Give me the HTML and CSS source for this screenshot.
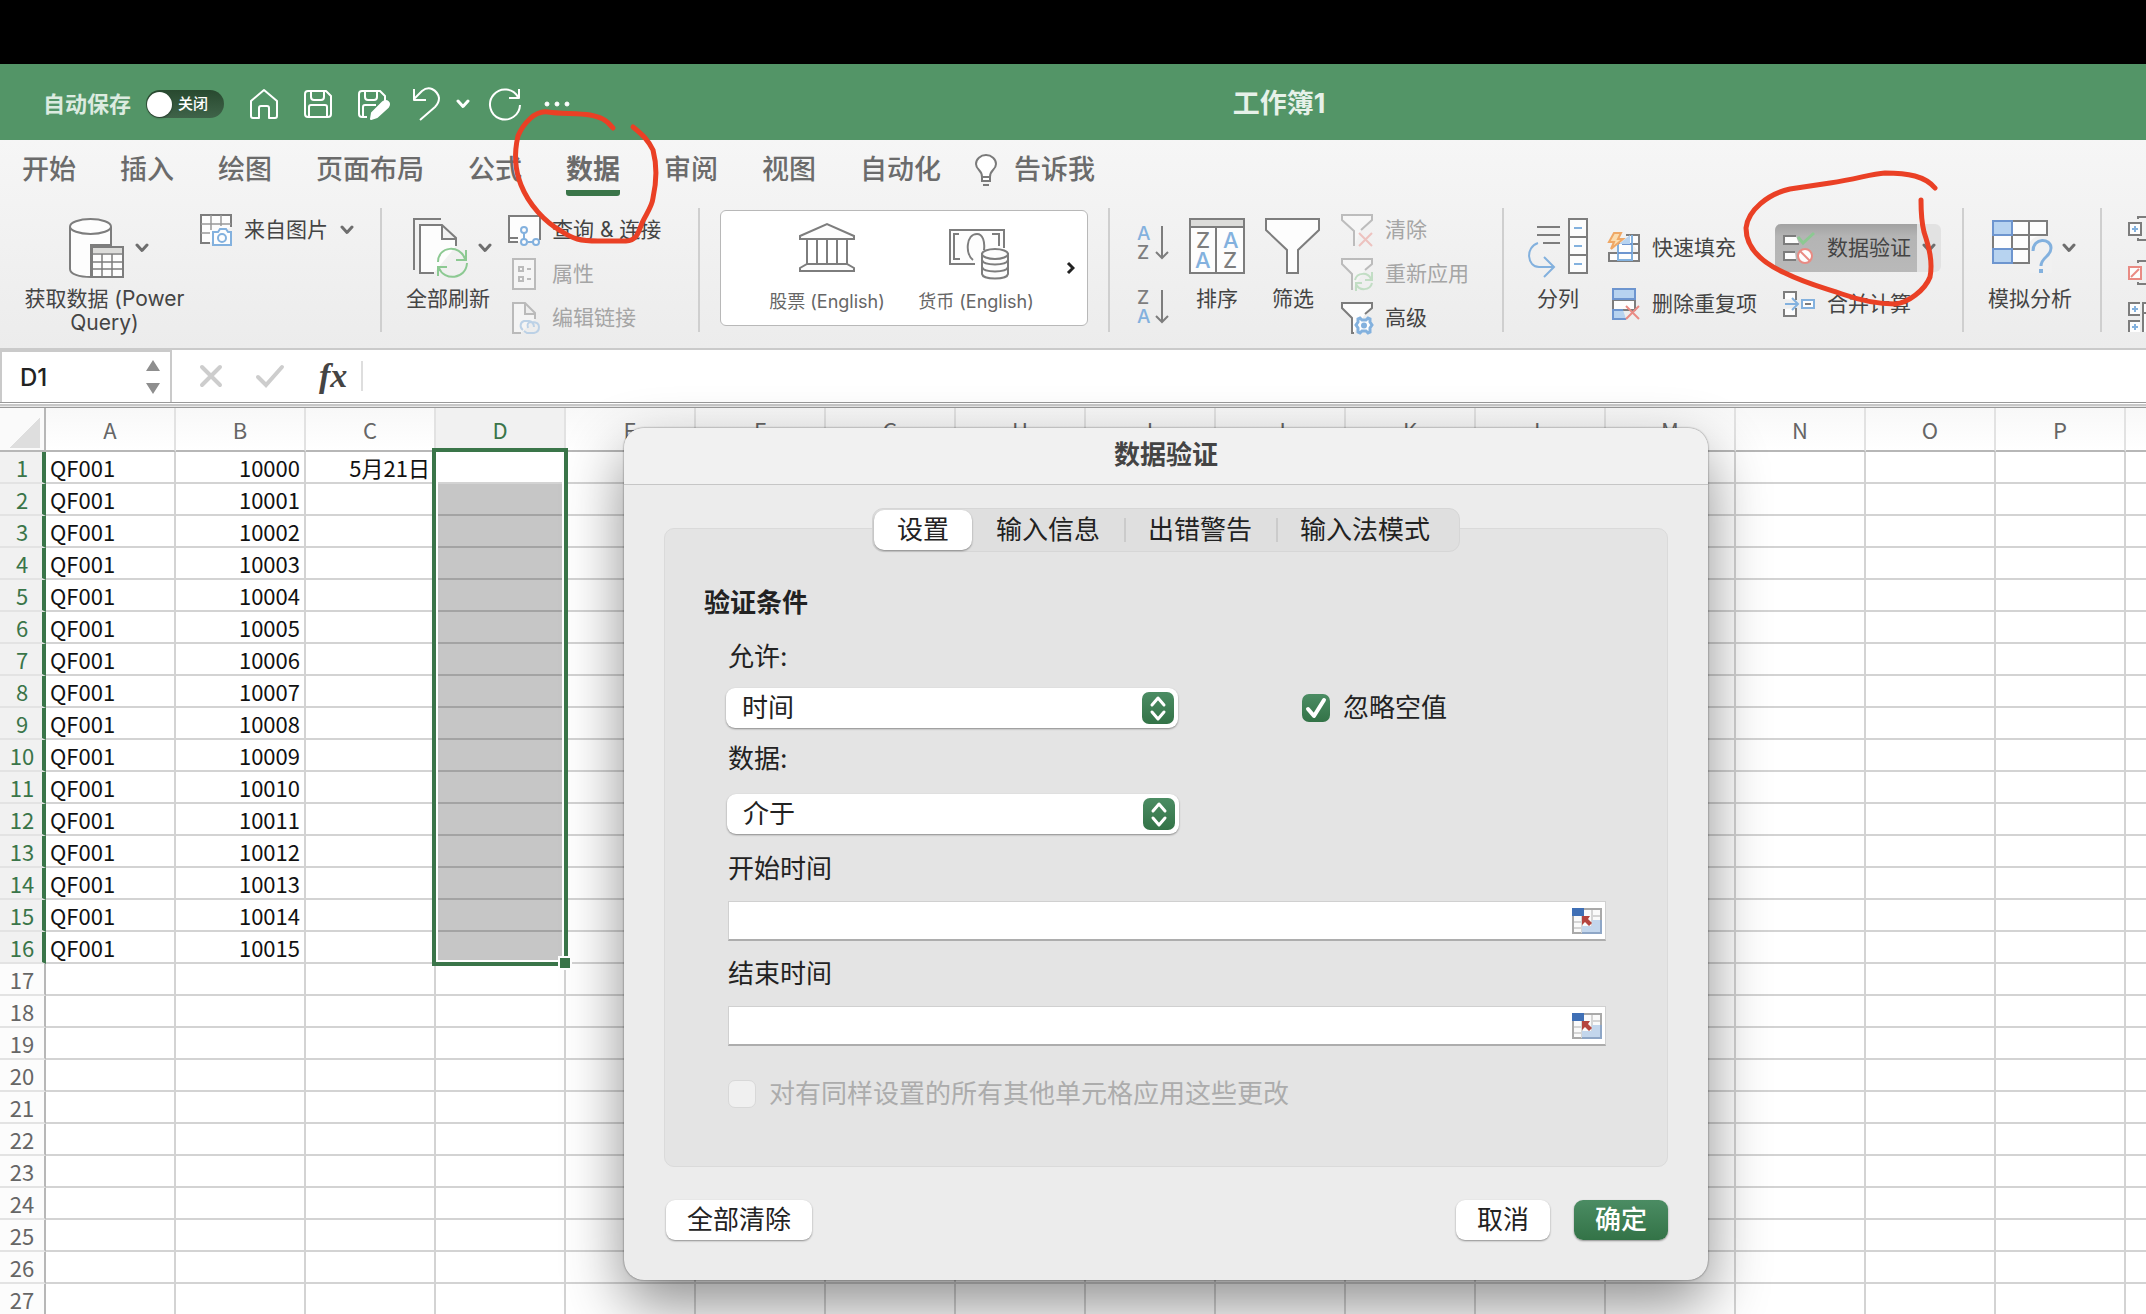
FILE: index.html
```html
<!DOCTYPE html>
<html lang="zh-CN">
<head>
<meta charset="utf-8">
<title>工作簿1</title>
<link rel="stylesheet" href="styles.css">
</head>
<body>
<svg class="defs" aria-hidden="true">
  <symbol id="chevron" viewBox="0 0 14 10"><path d="M2 2l5 5.500l5-5.500" fill="none" stroke="currentColor" stroke-width="3" stroke-linecap="round" stroke-linejoin="round"/></symbol>
  <symbol id="updown" viewBox="0 0 32 32"><path d="M10 13l6-7 6 7M10 20l6 7 6-7" fill="none" stroke="#fff" stroke-width="3" stroke-linecap="round" stroke-linejoin="round"/></symbol>
  <symbol id="picker" viewBox="0 0 30 26">
    <rect x="1" y="1" width="28" height="24" fill="#fafafa" stroke="#a9a9a9" stroke-width="2"/>
    <path d="M2 14h8M2 20h26M10 8v17M20 2v23M20 8h8" stroke="#d5d5d5" stroke-width="2"/>
    <path d="M20 12h9v13H10v-7h10z" fill="#c3d6ec"/>
    <path d="M10 25h19V12" fill="none" stroke="#8ea6c6" stroke-width="2"/>
    <path d="M0 0h12v8H0z" fill="#3f6fb5"/>
    <path d="M10 8h8l-2 3 4 4-3 3-4-4-3 3z" fill="#b5443e"/>
  </symbol>
</svg>

<div class="top-strip"></div>

<header class="titlebar">
  <label class="autosave-label" for="autosave">自动保存</label>
  <button class="toggle" id="autosave" type="button"><span class="knob"></span>关闭</button>
  <nav class="quick" aria-label="快速访问">
    <button type="button" aria-label="主页"><svg width="32" height="32"><path d="M3 13L16 2l13 11v15a2 2 0 0 1-2 2h-6V20q0-2-2-2h-6q-2 0-2 2v10H5a2 2 0 0 1-2-2z"/></svg></button>
    <button type="button" aria-label="保存"><svg width="32" height="32"><path d="M6 3h18l5 5v18a3 3 0 0 1-3 3H6a3 3 0 0 1-3-3V6a3 3 0 0 1 3-3zM9 3v6q0 3 3 3h7q3 0 3-3V3M7 29V19q0-2 2-2h14q2 0 2 2v10"/></svg></button>
    <button type="button" aria-label="另存为"><svg width="32" height="32"><path d="M11 29H6a3 3 0 0 1-3-3V6a3 3 0 0 1 3-3h18l5 5v6M9 3v6q0 3 3 3h6q3 0 3-3V3M7 29V19q0-2 2-2h11"/><path class="solid" d="M15 31l1-6 11-11q3-2 5 0t0 5L21 29z"/></svg></button>
    <span class="undo">
      <button type="button" aria-label="撤消"><svg width="32" height="34"><path d="M4 2v11h12M4 12l8-8q5-4 10-2 6 3 7 9 0 5-4 9L10 33"/></svg></button>
      <button type="button" aria-label="撤消列表"><svg width="14" height="10"><use href="#chevron"/></svg></button>
    </span>
    <button type="button" aria-label="恢复"><svg width="32" height="34"><path d="M29 2v9H19M28 10A15 15 0 1 0 30 18"/></svg></button>
    <button type="button" aria-label="更多"><svg width="26" height="8"><circle class="solid" cx="3" cy="4" r="2"/><circle class="solid" cx="13" cy="4" r="2"/><circle class="solid" cx="23" cy="4" r="2"/></svg></button>
  </nav>
  <h1 class="doc-title">工作簿1</h1>
</header>

<section class="ribbon">
  <nav class="tabs" aria-label="功能区">
    <a href="#">开始</a><a href="#">插入</a><a href="#">绘图</a><a href="#">页面布局</a><a href="#">公式</a><a href="#" class="active">数据</a><a href="#">审阅</a><a href="#">视图</a><a href="#">自动化</a>
    <a href="#" class="tell"><svg width="22" height="34" fill="#fff" stroke="#7a7a7a" stroke-width="2"><path d="M7 23q0-4-3-7-3-3-3-6a10 9 0 0 1 20 0q0 3-3 6-3 3-3 7v4H7zM7 23h8M8 31h6"/></svg>告诉我</a>
  </nav>

  <div class="groups">
    <div class="group g-get">
      <button class="big" type="button">
        <span class="icon-row"><svg width="56" height="60" class="ico">
          <path class="paper" d="M1 9v42c0 5 9 8 21 8V27h20V9"/><ellipse class="paper" cx="21.500" cy="8.500" rx="20.500" ry="7.500"/>
          <path class="paper" d="M23 29h31v30H23z"/><path d="M24 30h29v5H24z" fill="#dcdcda" stroke="none"/><path d="M23 36h31M23 44h31M23 51h31M33 36v23M43 36v23" stroke-width="1.500"/><path d="M23 29h31v30H23z"/>
        </svg><svg class="chev" width="14" height="10"><use href="#chevron"/></svg></span>
        <span>获取数据 (Power<br>Query)</span>
      </button>
      <div class="small-col">
        <button class="small" type="button"><svg width="32" height="32" class="ico">
          <path class="paper" d="M10 29H1V1h30v12"/><path d="M1 10h30M1 19h9M11 1v15M21 1v11" stroke="#999" stroke-width="1.500"/>
          <path class="blue paper" d="M13 18h5l2-3h6l2 3h3v13H13z"/><circle class="blue" cx="22" cy="24" r="4"/>
        </svg>来自图片<svg class="chev" width="14" height="10"><use href="#chevron"/></svg></button>
      </div>
    </div>

    <div class="group g-query">
      <button class="big" type="button">
        <span class="icon-row"><svg width="56" height="60" class="ico">
          <path d="M29 1H2v51"/><path class="paper" d="M22 55H8V7h22l14 13v8M30 7v14h14"/>
          <path class="green" d="M26 44C26 28 48 26 53 41M54 32v10H44M55 45C54 62 32 63 27 50M26 58V49h9"/>
        </svg><svg class="chev" width="14" height="10"><use href="#chevron"/></svg></span>
        <span>全部刷新</span>
      </button>
      <div class="small-col">
        <button class="small" type="button"><svg width="32" height="32" class="ico"><path class="paper" d="M10 28H1V2h31v24M1 24h9"/><g class="blue paper"><path d="M16 19v6M20 28h5"/><circle cx="16" cy="16" r="3"/><circle cx="16" cy="28" r="3"/><circle cx="28" cy="28" r="3"/></g></svg>查询 &amp; 连接</button>
        <button class="small off" type="button" disabled><svg width="32" height="32" class="ico"><path class="paper" d="M5 1h22v30H5z"/><path d="M11 9h4v4h-4zM11 19h4v4h-4zM19 11h4M19 21h4"/></svg>属性</button>
        <button class="small off" type="button" disabled><svg width="32" height="32" class="ico"><path class="paper" d="M13 31H5V1h12l10 10v6M17 1v11h10"/><path class="blue" d="M15 28a5 5 0 0 1 1-9h5q5 1 5 6M20 26q-2-6 4-6 7 0 7 5t-5 6h-7l-3-2"/></svg>编辑链接</button>
      </div>
    </div>

    <div class="group g-types">
      <div class="gallery">
        <button class="type" type="button"><svg width="60" height="60" class="ico"><path class="paper" d="M3 17v-3L30 2l27 12v3zM10 17v25M20 17v25M30 17v25M40 17v25M50 17v25M10 42h40l7 4v3H3v-3z"/></svg>股票 (English)</button>
        <button class="type" type="button"><svg width="60" height="60" class="ico"><path class="paper" d="M29 42H4V8h54v18"/><path d="M13 12H8v25h6M46 12h7v12M27 38c-8-6-7-26 4-26 6 0 8 8 7 16"/><path class="paper" d="M36 31v21c1 6 25 6 26 0V31"/><ellipse class="paper" cx="49" cy="32" rx="13" ry="5"/><path d="M36 38c2 6 24 6 26 0M36 45c2 6 24 6 26 0"/></svg>货币 (English)</button>
        <button class="next" type="button" aria-label="更多类型"><svg width="9" height="14"><path d="M2 2l5 5-5 5" fill="none" stroke="#222" stroke-width="3"/></svg></button>
      </div>
    </div>

    <div class="group g-sort">
      <div class="order">
        <button type="button" aria-label="升序"><svg width="32" height="34" class="ico"><text x="0" y="14" class="lt a">A</text><text x="0" y="33" class="lt z">Z</text><path d="M25 0v32M19 26l6 6 6-6"/></svg></button>
        <button type="button" aria-label="降序"><svg width="32" height="34" class="ico"><text x="0" y="14" class="lt z">Z</text><text x="0" y="33" class="lt a">A</text><path d="M25 0v32M19 26l6 6 6-6"/></svg></button>
      </div>
      <button class="big" type="button"><svg width="56" height="60" class="ico"><path class="paper" d="M1 1h54v54H1z"/><path d="M2 2h52v6H2z" fill="#dcdcda" stroke="none"/><path d="M1 9h54M27 9v46"/><text x="7" y="30" class="lg z">Z</text><text x="6" y="50" class="lg a">A</text><text x="34" y="30" class="lg a">A</text><text x="34" y="50" class="lg z">Z</text></svg><span>排序</span></button>
      <button class="big" type="button"><svg width="56" height="60" class="ico"><path class="paper" d="M1 1h53v11L33 32v23H22V32L1 12z"/></svg><span>筛选</span></button>
      <div class="small-col">
        <button class="small off" type="button" disabled><svg width="32" height="32" class="ico"><path class="paper" d="M13 32V17L1 6V1h30v5L20 16"/><path class="red" d="M18 19l13 13M31 19L18 32"/></svg>清除</button>
        <button class="small off" type="button" disabled><svg width="32" height="32" class="ico"><path class="paper" d="M11 32V16L1 6V1h30v5l-7 6"/><path class="green" d="M14 22c2-8 13-8 16-1M31 14v8h-7M31 25c-2 8-13 8-16 1M15 33v-8h6"/></svg>重新应用</button>
        <button class="small" type="button"><svg width="32" height="32" class="ico"><path class="paper" d="M13 31h-2V16L1 6V1h30v5l-7 6"/><path class="blue paper" stroke-width="3" d="M19 16l2 2h4l2-2 2 1v3l2 3-2 3v4l-2 1-2-2h-4l-2 2-2-1v-4l-2-3 2-3v-3z"/><circle cx="23" cy="23.500" r="3" fill="#83b1de" stroke="none"/></svg>高级</button>
      </div>
    </div>

    <div class="group g-tools">
      <button class="big" type="button"><svg width="60" height="60" class="ico"><path d="M9 9h23M9 17h23M15 25h17"/><path class="paper" d="M41 1h18v54H41zM41 19h18M41 37h18"/><path class="blue" d="M46 10h8M46 28h8M46 46h8M10 25C-3 29-1 49 11 49h14M16 39l10 10-10 10"/></svg><span>分列</span></button>
      <div class="pair-col">
        <button class="small" type="button"><svg width="32" height="32" class="ico"><path class="paper" d="M18 3h13v26H1v-8h30M10 12h21M24 3v26"/><path class="blue paper" stroke="#6d95cf" d="M10 13v15h14V3"/><path d="M10 21h14M14 12h10" stroke="#6d95cf"/><path d="M11 12L22 3v9z" fill="#b7d3f0" stroke="none"/><path d="M6 1h7l-3 6h5L3 17l3-7H1z" fill="#fbdcae" stroke="#efa866"/></svg>快速填充</button>
        <button class="small" type="button"><svg width="32" height="32" class="ico"><path class="paper" d="M5 12h22v10H5z"/><path d="M5 1h22v10H5zM18 31H5V22h10" fill="#b7d3f0" stroke="#6d95cf"/><path class="red" d="M18 18l13 13M31 18L18 31"/></svg>删除重复项</button>
      </div>
      <div class="pair-col">
        <div class="split">
          <button class="small pressed" type="button"><svg width="32" height="32" class="ico"><path class="paper" d="M13 4H1v8h15M12 20H1v8h12"/><path class="green" stroke-width="3" d="M15 5l5 6L31 1"/><circle class="red paper" cx="22" cy="24" r="7"/><path class="red" d="M17 19l10 10"/></svg>数据验证</button>
          <button class="drop" type="button" aria-label="数据验证选项"><svg class="chev" width="14" height="10"><use href="#chevron"/></svg></button>
        </div>
        <button class="small merge" type="button"><svg width="32" height="32" class="ico"><path class="paper" d="M1 11V4h12v8M1 21v7h12v-8"/><path class="blue" d="M2 16h12M9 10l6 6-6 6"/><path class="blue paper" d="M19 12h12v8H19z"/><path d="M22 16h6"/></svg>合并计算</button>
      </div>
    </div>

    <div class="group g-whatif">
      <button class="big" type="button">
        <span class="icon-row"><svg width="60" height="60" class="ico"><path class="paper" d="M1 3h54v42H1zM1 17h54M1 31h54M20 3v42M37 3v42"/><path d="M1 3h19v14H1zM1 31h19v14H1z" fill="#b7d3f0" stroke="#6d95cf"/><path d="M38 55V24q4-6 10-6h12v37z" fill="#f1f1f1" stroke="none"/><path class="blue" stroke-width="3" d="M41 33c0-14 18-13 18-3 0 9-10 9-10 18"/><path d="M47 51h4v4h-4z" fill="#83b1de" stroke="none"/></svg><svg class="chev" width="14" height="10"><use href="#chevron"/></svg></span>
        <span>模拟分析</span>
      </button>
    </div>

    <div class="group g-outline">
      <div class="small-col">
        <button class="small" type="button" aria-label="组合"><svg width="32" height="32" class="ico"><path d="M10 5V3h22M10 27v-3M10 26h22"/><path class="paper" d="M1 9h12v12H1z"/><path class="blue" d="M7 12v6M4 15h6"/></svg></button>
        <button class="small" type="button" aria-label="取消组合"><svg width="32" height="32" class="ico"><path d="M10 5V3h22M10 27v-3M10 26h22"/><path class="red paper" d="M1 9h12v12H1zM3 19l8-8"/></svg></button>
        <button class="small" type="button" aria-label="分类汇总"><svg width="32" height="32" class="ico"><path class="paper" d="M12 1H1v12h11M12 19H1v12h11M15 1h17v30H15zM15 11h17"/><path class="blue" d="M7 4v6M4 7h6M7 22v6M4 25h6"/></svg></button>
      </div>
    </div>
  </div>
</section>

<section class="formula">
  <div class="namebox"><input type="text" value="D1" aria-label="名称框"><svg width="14" height="34" fill="#8e8e8e"><path d="M0 11L7 0l7 11zM0 23h14L7 34z"/></svg></div>
  <button type="button" aria-label="取消输入"><svg width="24" height="24"><path d="M3 3l18 18M21 3L3 21" stroke="#cdcdcd" stroke-width="4" stroke-linecap="round"/></svg></button>
  <button type="button" aria-label="输入"><svg width="30" height="24" fill="none"><path d="M3 13l8 8L27 3" stroke="#cdcdcd" stroke-width="4" stroke-linecap="round"/></svg></button>
  <button class="fx" type="button">fx</button>
  <input class="formula-input" type="text" aria-label="编辑栏">
</section>

<main class="workspace">
  <div class="divider"></div>
  <table class="sheet">
    <thead id="sheet-head"></thead>
    <tbody id="sheet-body"></tbody>
  </table>
  <div class="selection"><span class="handle"></span></div>

  <div class="dialog" role="dialog" aria-labelledby="dlg-title">
    <h2 class="dialog-title" id="dlg-title">数据验证</h2>
    <div class="segments" role="tablist">
      <button type="button" role="tab" class="on">设置</button><button type="button" role="tab">输入信息</button><button type="button" role="tab" class="div">出错警告</button><button type="button" role="tab" class="div">输入法模式</button>
    </div>
    <form class="panel">
      <h3>验证条件</h3>
      <div class="fields">
        <label for="allow">允许:</label>
        <div class="row">
          <div class="select"><select id="allow"><option>时间</option></select><svg width="32" height="32"><use href="#updown"/></svg></div>
          <label class="check"><span class="tick"><input type="checkbox" checked><svg width="28" height="28"><path d="M6 15l6 7L22 6" fill="none" stroke="#fff" stroke-width="4" stroke-linecap="round" stroke-linejoin="round"/></svg></span>忽略空值</label>
        </div>
        <label for="rule">数据:</label>
        <div class="select second"><select id="rule"><option>介于</option></select><svg width="32" height="32"><use href="#updown"/></svg></div>
        <label for="start">开始时间</label>
        <div class="ref"><input id="start" type="text"><button type="button" aria-label="选择区域"><svg width="30" height="26"><use href="#picker"/></svg></button></div>
        <label for="end">结束时间</label>
        <div class="ref"><input id="end" type="text"><button type="button" aria-label="选择区域"><svg width="30" height="26"><use href="#picker"/></svg></button></div>
        <label class="check dim"><span class="tick"><input type="checkbox" disabled></span>对有同样设置的所有其他单元格应用这些更改</label>
      </div>
    </form>
    <footer class="actions">
      <button type="button">全部清除</button>
      <span class="spacer"></span>
      <button type="button">取消</button>
      <button type="button" class="primary">确定</button>
    </footer>
  </div>
</main>

<svg class="marks" aria-hidden="true">
  <path d="M613 128C606 119 600 117 590 115C578 113 560 114 548 112C535 110 523 124 518 136C514 153 515 170 521 185C529 205 545 222 561 231C573 239 580 241 598 241H626C636 241 638 234 642 223C646 214 652 207 653 198C657 180 657 165 653 150C648 140 643 135 633 127"/>
  <path d="M1935 188C1925 176 1908 173 1885 173C1870 174 1858 179 1830 183L1790 189C1768 194 1748 210 1746 228C1746 250 1765 264 1785 273C1807 284 1825 288 1842 294C1862 301 1880 304 1895 304C1908 303 1925 290 1930 277C1933 262 1929 247 1924 232C1921 220 1921 210 1921 200"/>
</svg>
<script src="sheet.js"></script>
</body>
</html>
```
FILE: sheet.js
```js
const columns = 'ABCDEFGHIJKLMNOP'.split('').concat('');
const filled = 16;
const rowCount = 27;

let head = '<tr><th class="corner"></th>';
columns.forEach((c) => {
  const cls = c === 'D' ? ' class="sel"' : c === '' ? ' class="rest"' : '';
  head += `<th scope="col"${cls}>${c}</th>`;
});
document.getElementById('sheet-head').innerHTML = head + '</tr>';

let body = '';
for (let r = 1; r <= rowCount; r++) {
  body += `<tr><th scope="row"${r <= filled ? ' class="sel"' : ''}>${r}</th>`;
  columns.forEach((c) => {
    let text = '';
    let cls = '';
    if (r <= filled && c === 'A') text = 'QF001';
    if (r <= filled && c === 'B') { text = String(9999 + r); cls = 'num'; }
    if (r === 1 && c === 'C') { text = '5月21日'; cls = 'date'; }
    if (r > 1 && r <= filled && c === 'D') cls = 'picked';
    body += `<td${cls ? ` class="${cls}"` : ''}>${text}</td>`;
  });
  body += '</tr>';
}
document.getElementById('sheet-body').innerHTML = body;
```
FILE: styles.css
```css
* { box-sizing: border-box; }
body {
  margin: 0;
  height: 100vh;
  overflow: hidden;
  position: relative;
  display: flex;
  flex-direction: column;
  background: #fff;
  color: #222;
  font-family: Inter, "Noto Sans CJK SC", sans-serif;
  font-size: 21px;
  line-height: 24px;
}
button, input, select { font: inherit; color: inherit; }
button { margin: 0; padding: 0; border: 0; background: none; white-space: nowrap; }
svg { display: block; flex: none; }
h1, h2, h3 { margin: 0; }
.defs { position: absolute; width: 0; height: 0; }

/* Title bar */
.top-strip { flex: none; height: 64px; background: #000; }
.titlebar {
  flex: none;
  display: flex;
  align-items: center;
  height: 76px;
  padding: 4px 0 0 43px;
  background: #539567;
  color: #fff;
}
.autosave-label { font-size: 22px; font-weight: 700; color: #dcebe0; }
.toggle {
  display: flex;
  align-items: center;
  gap: 6px;
  width: 78px;
  height: 28px;
  margin-left: 15px;
  padding: 1px;
  border-radius: 14px;
  background: linear-gradient(#28492f, #3f6349);
  font-size: 15px;
  font-weight: 500;
}
.knob { width: 25px; height: 25px; border-radius: 50%; background: #fff; box-shadow: 0 1px 2px #0006; }
.quick { display: flex; align-items: center; gap: 22px; margin-left: 24px; }
.quick path { fill: none; stroke: #fff; stroke-width: 2; stroke-linejoin: round; }
.quick .solid { fill: #fff; stroke: #fff; }
.quick svg { overflow: visible; }
.undo { display: flex; align-items: center; gap: 14px; margin-right: -2px; }
.doc-title { flex: 1; padding-right: 158px; text-align: center; font-size: 27px; font-weight: 700; color: #e6f1e9; }

/* Ribbon */
.ribbon {
  flex: none;
  border-bottom: 2px solid #cacaca;
  background: linear-gradient(#f6f6f6, #f2f2f2 40%, #ececec);
  color: #444;
}
.tabs { display: flex; gap: 44px; height: 68px; padding: 10px 0 0 22px; }
.tabs a {
  height: 46px;
  color: #6b6b6b;
  font-size: 27px;
  font-weight: 500;
  line-height: 39px;
  text-decoration: none;
  white-space: nowrap;
}
.tabs .active { border-bottom: 6px solid #3a7549; border-radius: 3px; font-weight: 700; }
.tabs .tell { display: flex; gap: 17px; margin-left: -10px; }
.tell svg { margin-top: 4px; }
.groups { display: flex; height: 140px; padding-bottom: 16px; overflow: hidden; }
.group { flex: none; display: flex; align-items: flex-start; border-right: 2px solid #cfcfcf; }
.g-get { width: 382px; padding-left: 24px; gap: 15px; }
.g-query { width: 318px; padding-left: 22px; gap: 16px; }
.g-types { width: 410px; padding: 2px 0 0 20px; }
.g-sort { width: 394px; padding-left: 27px; gap: 20px; }
.g-tools { width: 460px; padding-left: 24px; gap: 20px; }
.g-whatif { width: 138px; padding-left: 20px; }
.g-outline { flex: 1 0 0; min-width: 0; padding-left: 26px; border: 0; overflow: hidden; }
.big { display: flex; flex-direction: column; align-items: center; gap: 9px; min-width: 56px; padding-top: 10px; }
.g-get .big { width: 161px; }
.g-query .big { width: 88px; }
.g-whatif .big { width: 92px; }
.icon-row { display: flex; align-items: center; gap: 10px; padding-left: 8px; }
.chev { color: #6e6e6e; }
.small-col { display: flex; flex-direction: column; }
.small { display: flex; align-items: center; gap: 12px; height: 44px; }
.small:disabled { color: #a5a5a5; }
.off .ico { opacity: .45; }
.pair-col { display: flex; flex-direction: column; gap: 8px; padding-top: 16px; }
.pair-col + .pair-col { margin-left: -2px; }
.pair-col .small { height: 48px; }
.split { display: flex; border-radius: 6px; overflow: hidden; background: #e2e2e2; }
.pressed { padding: 0 6px 0 8px; background: linear-gradient(#a2a2a2, #b4b4b4 25%, #b9b9b9); }
.drop { width: 24px; display: flex; align-items: center; justify-content: center; }
.merge { padding-left: 8px; }
.ico { fill: none; stroke: #7d7d7d; stroke-width: 2; overflow: visible; }
.ico .paper { fill: #fdfdfd; }
.ico .blue { stroke: #83b1de; }
.ico .green { stroke: #8cc992; }
.ico .red { stroke: #e98b84; }
.ico text { stroke: none; font-family: Inter, sans-serif; font-weight: 500; }
.lt { font-size: 19px; }
.lg { font-size: 22px; }
.ico .a { fill: #83b1de; }
.ico .z { fill: #7d7d7d; }
.order { display: flex; flex-direction: column; gap: 30px; padding-top: 18px; }
.gallery {
  display: flex;
  width: 368px;
  height: 116px;
  padding-left: 47px;
  gap: 31px;
  border: 1px solid #b8b8b8;
  border-radius: 6px;
  background: #fff;
}
.type { display: flex; flex-direction: column; align-items: center; gap: 8px; width: 118px; padding-top: 11px; color: #666; font-size: 18px; }
.gallery .next { align-self: center; }

/* Formula bar */
.formula { flex: none; display: flex; align-items: center; height: 52px; background: #fff; }
.namebox {
  display: flex;
  align-items: center;
  align-self: stretch;
  width: 172px;
  margin-right: 27px;
  padding-right: 10px;
  border: solid #cacaca;
  border-width: 2px 2px 0;
}
.namebox input { flex: 1; min-width: 0; padding: 0 0 0 18px; border: 0; outline: 0; background: none; font-size: 24px; font-weight: 500; }
.formula button + button { margin-left: 32px; }
.formula .fx { margin-left: 34px; font: italic 700 34px/40px "Liberation Serif", serif; color: #444; }
.formula-input { flex: 1; height: 30px; margin-left: 14px; border: 0; border-left: 2px solid #dedede; background: none; outline: 0; }

/* Grid */
.workspace { flex: 1; min-height: 0; position: relative; }
.divider { height: 6px; border: solid #999; border-width: 1px 0; background: linear-gradient(#fff 25%, #c8c8c8 25%, #c8c8c8 75%, #e8e8e8 75%); }
.sheet {
  width: 100%;
  table-layout: fixed;
  border-collapse: separate;
  border-spacing: 0;
  font-family: "Noto Sans CJK SC", sans-serif;
  font-size: 22px;
  color: #111;
}
.sheet th, .sheet td { height: 32px; padding: 0 4px; border: solid #d3d3d3; border-width: 0 2px 2px 0; line-height: 28px; white-space: nowrap; }
.sheet th { font-weight: 400; color: #666; text-align: center; background: #fcfcfc; }
.sheet thead th { width: 130px; height: 44px; border-color: #e2e2e2; border-bottom-color: #b7b7b7; background: linear-gradient(#f8f8f8, #fff); }
.sheet thead .corner { width: 46px; border-right-color: #b7b7b7; background: linear-gradient(to bottom right, transparent 50%, #dedede 50%) 10px 10px / 30px 30px no-repeat #fafafa; }
.sheet thead .rest { width: auto; }
.sheet tr > :last-child { border-right: 0; }
.sheet tbody th { padding: 0; border-right-color: #b7b7b7; border-bottom-color: #e3e3e3; }
.sheet th.sel, .sheet thead th.sel { color: #3a7549; background: #f1f1f1; }
.sheet tbody th.sel { border-right: 4px solid #3a7549; padding-left: 2px; }
.sheet .num { text-align: right; }
.sheet .date { padding: 0 4px 0 0; text-align: right; }
.sheet .picked { background: #c6c6c6; border-bottom-color: #a3a3a3; }
.selection {
  position: absolute;
  left: 432px;
  top: 46px;
  width: 136px;
  height: 518px;
  border: 4px solid #3a7549;
  box-shadow: inset 0 0 0 2px #fff;
}
.handle { position: absolute; right: -8px; bottom: -8px; width: 14px; height: 14px; border: 2px solid #fff; background: #3a7549; }

/* Dialog */
.dialog {
  position: absolute;
  left: 624px;
  top: 26px;
  width: 1084px;
  padding-bottom: 40px;
  border-radius: 20px;
  background: #ececec;
  box-shadow: 0 0 2px #0009, 0 24px 60px #00000073;
  font-size: 26px;
  line-height: 36px;
}
.dialog-title { height: 57px; padding-top: 9px; border-bottom: 1px solid #c6c6c6; border-radius: 20px 20px 0 0; background: #f1f1f1; color: #444; text-align: center; font-size: 26px; font-weight: 700; }
.segments {
  position: relative;
  display: flex;
  width: fit-content;
  height: 44px;
  margin: 23px auto -24px;
  padding: 1px;
  border: 1px solid #d6d6d6;
  border-radius: 11px;
  background: #dfdfdf;
}
.segments button { position: relative; padding: 0 24px; }
.segments .on { padding: 0 23px; }
.segments button:last-child { padding-right: 28px; }
.segments .on { border-radius: 10px; background: #fff; box-shadow: 0 1px 2px #0006; }
.segments .div::before { content: ""; position: absolute; left: 0; top: 8px; width: 2px; height: 24px; background: #cbcbcb; }
.panel { margin: 0 40px; padding: 56px 61px 54px 39px; border: 1px solid #dadada; border-radius: 10px; background: #e4e4e4; }
.panel h3 { font-size: 26px; font-weight: 700; }
.fields { display: flex; flex-direction: column; padding: 18px 0 0 24px; }
.row { display: flex; align-items: center; gap: 124px; margin: 13px 0; }
.select { position: relative; width: 452px; height: 40px; margin-left: -2px; }
.select.second { margin: 17px 0 17px -1px; }
.select select { appearance: none; width: 100%; height: 100%; padding: 0 16px; border: 0; border-radius: 9px; background: #fff; box-shadow: 0 1px 2px #0006; outline: 0; }
.select svg { position: absolute; right: 4px; top: 4px; border-radius: 7px; background: linear-gradient(#4b8c63, #337347); pointer-events: none; }
.check { display: flex; align-items: center; gap: 13px; }
.tick { position: relative; display: block; width: 28px; height: 28px; }
.tick input { appearance: none; display: block; width: 100%; height: 100%; margin: 0; border-radius: 7px; background: linear-gradient(#4b8c63, #337347); }
.tick svg { position: absolute; left: 0; top: 0; pointer-events: none; }
.check.dim { color: #acacac; }
.dim .tick input { border: 1px solid #d8d8d8; background: #f0f0f0; }
.ref { display: flex; align-items: center; height: 40px; margin: 14px 0 15px; border: 1px solid #d0d0d0; border-bottom: 2px solid #adadad; background: #fff; padding-right: 3px; }
.ref input { flex: 1; min-width: 0; height: 100%; border: 0; outline: 0; background: none; }
.ref + .dim { margin-top: 15px; }
.actions { display: flex; gap: 24px; margin: 33px 40px 0 42px; }
.actions button { height: 40px; padding: 0 21px; border-radius: 9px; background: #fff; box-shadow: 0 1px 2px #0006; }
.actions .primary { background: linear-gradient(#4b8c63, #337347); color: #fff; font-weight: 500; }
.spacer { flex: 1; }

/* Hand-drawn circles */
.marks { position: absolute; left: 0; top: 0; width: 100%; height: 100%; pointer-events: none; }
.marks path { fill: none; stroke: #ea4025; stroke-width: 5; stroke-linecap: round; }
```
